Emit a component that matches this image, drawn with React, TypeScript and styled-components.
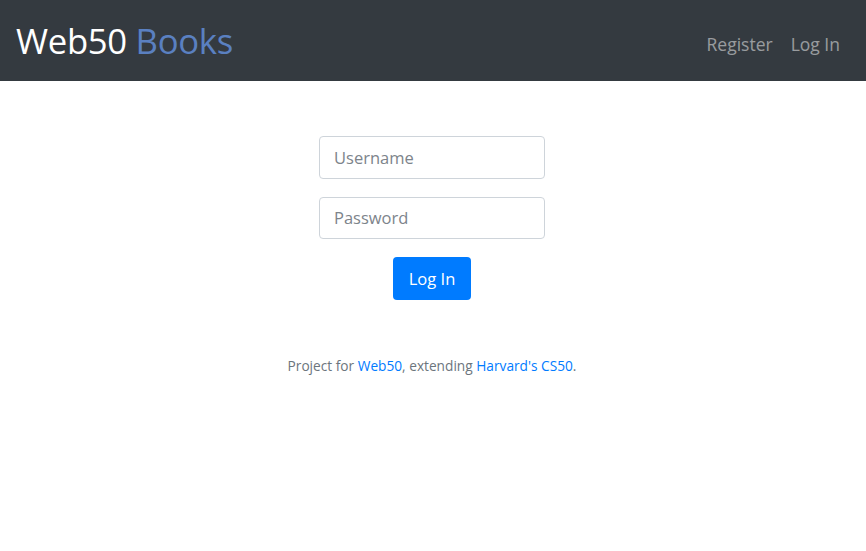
import React from "react";
import styled, { createGlobalStyle } from "styled-components";

const Global = createGlobalStyle`
  html, body { margin: 0; padding: 0; background: #fff; }
  body { font-family: "Open Sans", "Noto Sans", sans-serif; }
  * { box-sizing: border-box; }
`;

const Navbar = styled.nav`
  height: 81px;
  background: #343a40;
  display: flex;
  align-items: center;
  justify-content: space-between;
  padding: 0 16px 0 16px;
`;

const Brand = styled.a`
  font-size: 34.7px;
  color: #fff;
  text-decoration: none;
  letter-spacing: -0.3px;
  line-height: 1;
  padding-top: 2px;
`;

const BrandAccent = styled.span`
  color: #5a80c1;
`;

const NavLinks = styled.div`
  display: flex;
  gap: 18px;
  padding-top: 6px;
  padding-right: 10px;
`;

const NavLink = styled.a`
  font-size: 17.5px;
  color: rgba(255, 255, 255, 0.5);
  text-decoration: none;
`;

const Main = styled.main`
  display: flex;
  flex-direction: column;
  align-items: center;
  padding-top: 55px;
  padding-right: 2px;
`;

const Form = styled.form`
  display: flex;
  flex-direction: column;
  align-items: center;
  gap: 18px;
`;

const Input = styled.input`
  width: 226px;
  height: 42.5px;
  border: 1px solid #ced4da;
  border-radius: 4px;
  padding: 0 14px;
  font-family: inherit;
  font-size: 16.5px;
  color: #495057;
  outline: none;
  &::placeholder { color: #7d848b; }
`;

const Button = styled.button`
  width: 78px;
  height: 43px;
  background: #007bff;
  color: #fff;
  border: none;
  border-radius: 4px;
  font-family: inherit;
  font-size: 16.5px;
`;

const Footer = styled.p`
  margin: 56px 0 0;
  font-size: 13.7px;
  color: #6c757d;
  text-align: center;
`;

const Link = styled.a`
  color: #007bff;
  text-decoration: none;
`;

export default function App() {
  return (
    <>
      <Global />
      <Navbar>
        <Brand href="#">
          Web50 <BrandAccent>Books</BrandAccent>
        </Brand>
        <NavLinks>
          <NavLink href="#">Register</NavLink>
          <NavLink href="#">Log In</NavLink>
        </NavLinks>
      </Navbar>
      <Main>
        <Form onSubmit={(e) => e.preventDefault()}>
          <Input type="text" placeholder="Username" />
          <Input type="password" placeholder="Password" />
          <Button type="submit">Log In</Button>
        </Form>
        <Footer>
          Project for <Link href="#">Web50</Link>, extending{" "}
          <Link href="#">Harvard's CS50</Link>.
        </Footer>
      </Main>
    </>
  );
}
